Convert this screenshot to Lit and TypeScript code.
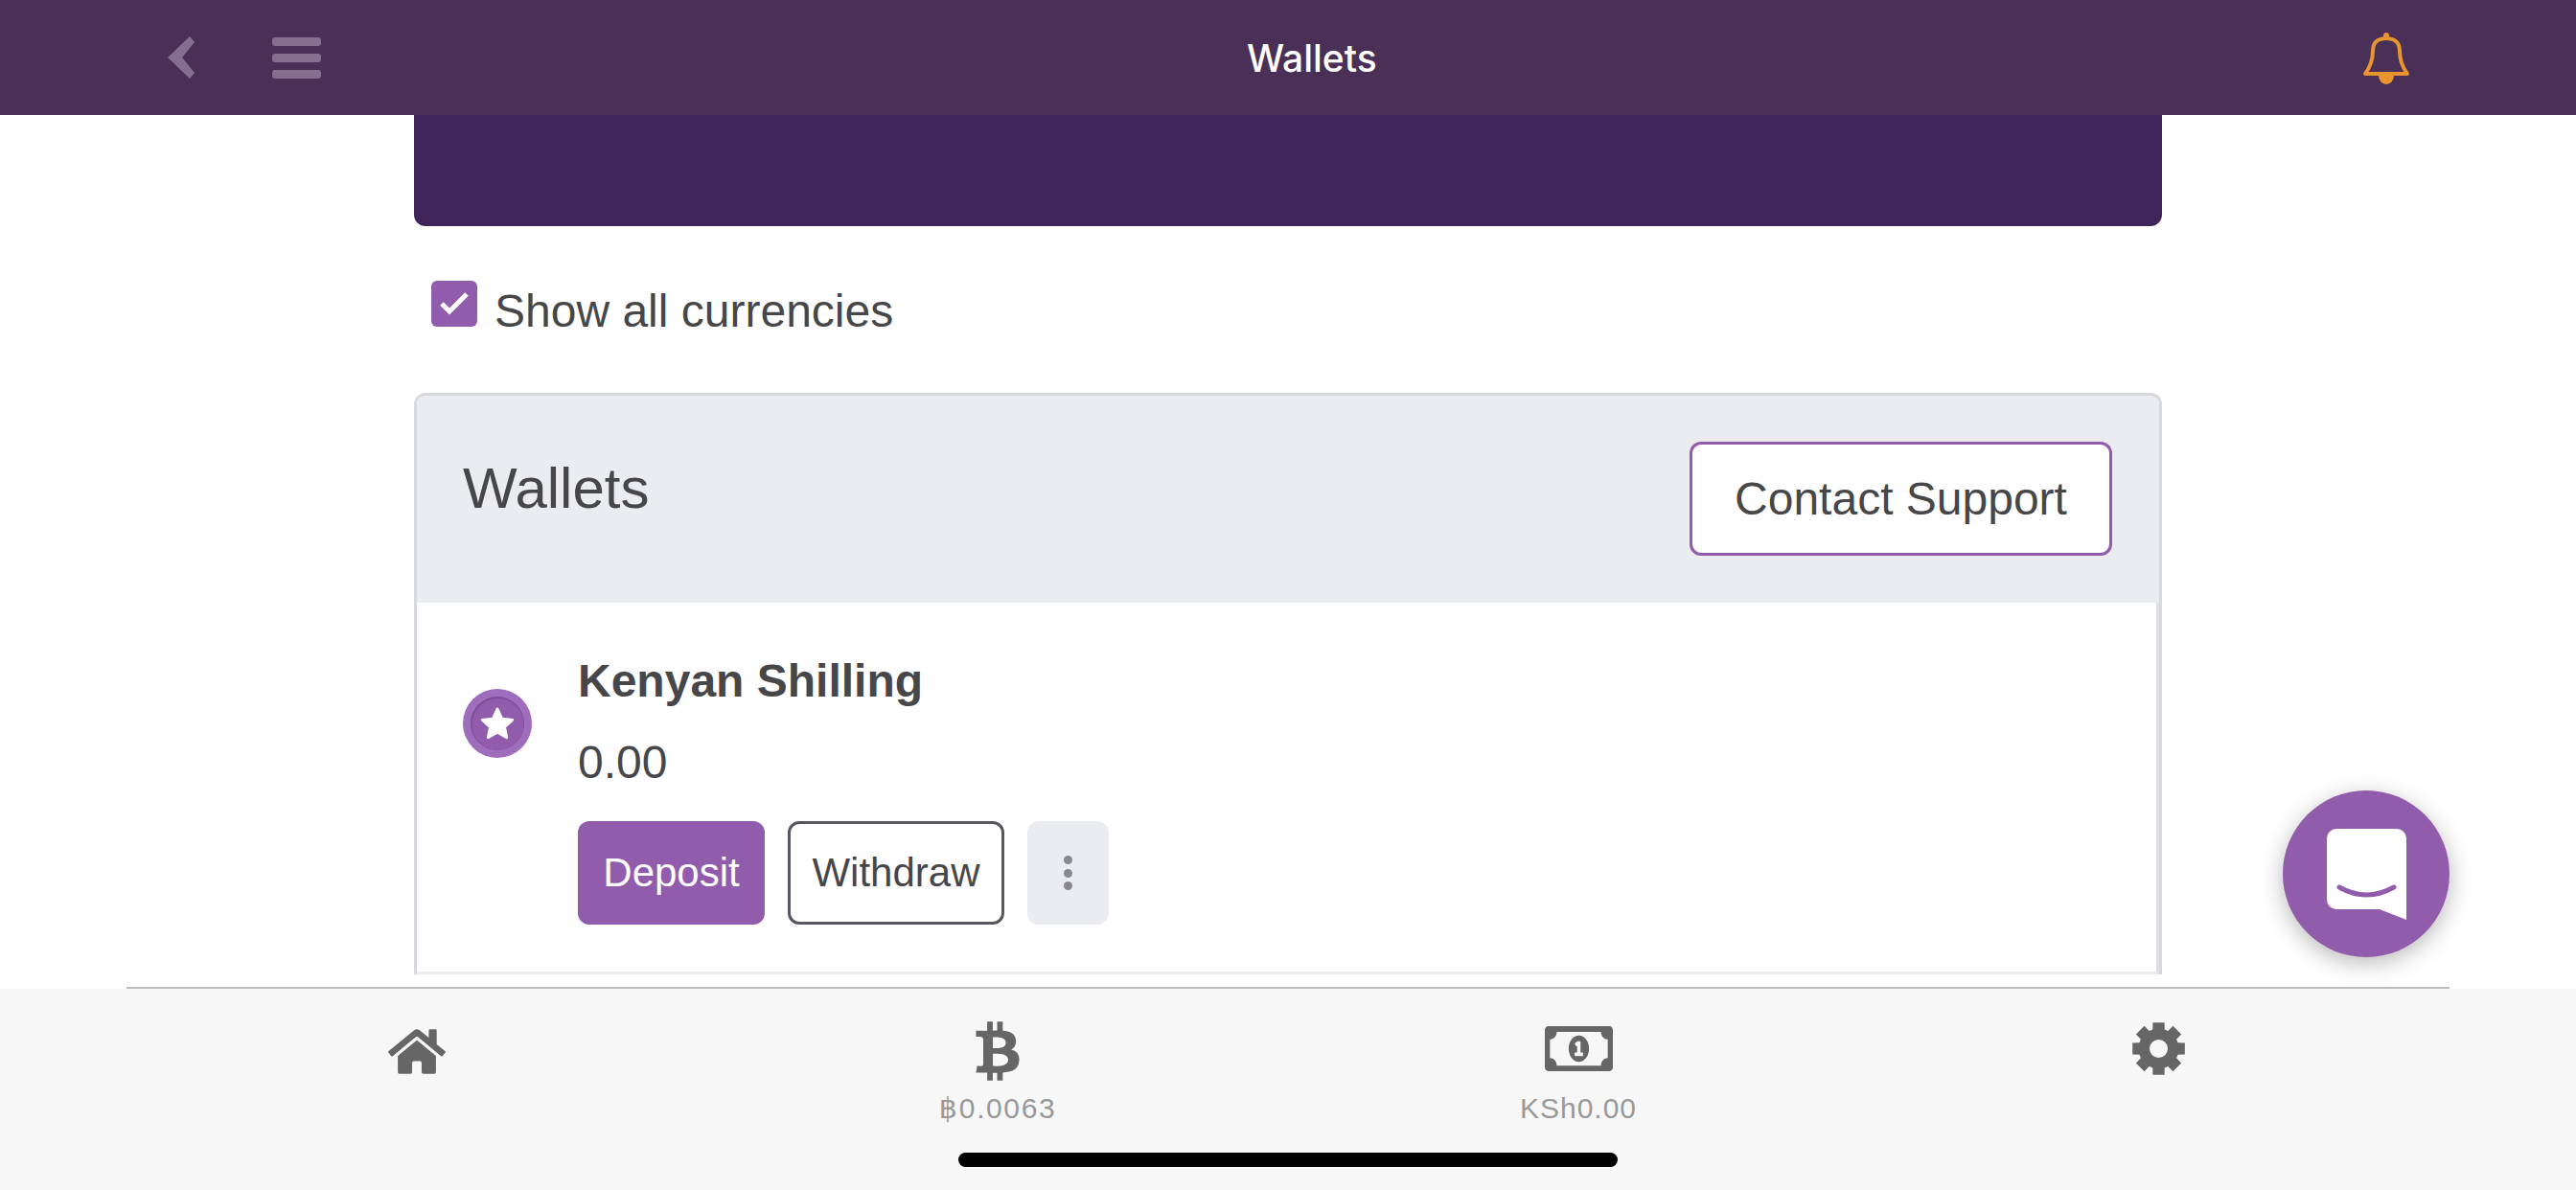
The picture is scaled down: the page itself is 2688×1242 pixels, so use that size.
import { LitElement, html, css, svg } from 'lit';
import { customElement } from 'lit/decorators.js';

// eight tooth gear, outer radius 28, centred in a 57 box
function gearPath(): string {
  const c = 28.5;
  const pts: string[] = [];
  const pt = (r: number, a: number) =>
    `${(c + r * Math.cos(a)).toFixed(2)} ${(c + r * Math.sin(a)).toFixed(2)}`;
  for (let i = 0; i < 8; i++) {
    const a = (i * Math.PI) / 4 - Math.PI / 2;
    pts.push(pt(21, a - 0.3), pt(28, a - 0.22), pt(28, a + 0.22), pt(21, a + 0.3));
  }
  return `M${pts.join('L')}Z`;
}

const HOME =
  'M280.37 148.26L96 300.11V464a16 16 0 0 0 16 16l112.06-.29a16 16 0 0 0 15.92-16V368a16 16 0 0 1 16-16h64a16 16 0 0 1 16 16v95.64a16 16 0 0 0 16 16.05L464 480a16 16 0 0 0 16-16V300L295.67 148.26a12.19 12.19 0 0 0-15.3 0zM571.6 251.47L488 182.56V44.05a12 12 0 0 0-12-12h-56a12 12 0 0 0-12 12v72.61L318.47 43a48 48 0 0 0-61 0L4.34 251.47a12 12 0 0 0-1.6 16.9l25.5 31A12 12 0 0 0 45.15 301l235.22-193.74a12.19 12.19 0 0 1 15.3 0L530.9 301a12 12 0 0 0 16.9-1.6l25.5-31a12 12 0 0 0-1.7-16.93z';
const BTC =
  'M310.204 242.638c27.73-14.18 45.377-39.39 41.28-81.3-5.358-57.351-52.458-76.573-114.85-81.929V0h-48.528v77.203c-12.605 0-25.525.315-38.444.63V0h-48.528v79.409c-17.842.539-38.622.276-97.37 0v51.678c38.31-.678 58.41-3.14 63.023 21.427v217.429c-2.925 19.492-18.524 16.685-53.2 16.071L3.76 443.68c88.48 0 97.37.315 97.37.315V512h48.528v-67.06c13.234.315 26.154.315 38.444.315V512h48.528v-68.005c81.299-4.412 135.647-24.894 142.895-101.467 5.671-61.446-23.32-88.862-69.32-99.89zM150.608 134.553c27.415 0 113.126-8.507 113.126 48.528 0 54.515-85.71 48.212-113.126 48.212v-96.74zm0 251.776V279.821c32.772 0 133.127-9.138 133.127 53.255-.001 60.186-100.355 53.253-133.127 53.253z';
const BILL =
  'M320 144c-53.02 0-96 50.14-96 112 0 61.85 42.98 112 96 112 53 0 96-50.13 96-112 0-61.86-42.98-112-96-112zm40 168c0 4.42-3.58 8-8 8h-64c-4.42 0-8-3.58-8-8v-16c0-4.42 3.58-8 8-8h16v-55.44l-.47.31a7.992 7.992 0 0 1-11.09-2.22l-8.88-13.31a7.992 7.992 0 0 1 2.22-11.09l15.33-10.22a23.99 23.99 0 0 1 13.31-4.03H328c4.42 0 8 3.58 8 8v88h16c4.42 0 8 3.58 8 8v16zM608 64H32C14.33 64 0 78.33 0 96v320c0 17.67 14.33 32 32 32h576c17.67 0 32-14.33 32-32V96c0-17.67-14.33-32-32-32zm-16 272c-35.35 0-64 28.65-64 64H112c0-35.35-28.65-64-64-64V176c35.35 0 64-28.65 64-64h416c0 35.35 28.65 64 64 64v160z';

@customElement('app-root')
export class AppRoot extends LitElement {
  static styles = css`
    :host {
      display: flex;
      flex-direction: column;
      position: relative;
      height: 1242px;
      overflow: hidden;
      background: #fff;
      color: #47474a;
      font-family: 'Liberation Sans', 'DejaVu Sans', sans-serif;
    }
    .topbar {
      flex: none;
      height: 120px;
      display: flex;
      align-items: center;
      padding: 0 173px 0 175px;
      background: #4a3057;
    }
    .back {
      display: block;
      width: 28px;
      height: 44px;
      margin-right: 81px;
    }
    .bars {
      display: flex;
      flex-direction: column;
      gap: 8px;
      width: 51px;
    }
    .bars span {
      height: 9px;
      border-radius: 3px;
      background: #84708e;
    }
    .title {
      margin: 1px 0 0 966px;
      font: 500 39px/48px Inter, sans-serif;
      color: #fff;
    }
    .bell {
      display: block;
      width: 50px;
      height: 55px;
      margin-left: auto;
      margin-top: 1px;
    }
    main {
      flex: 1;
      min-height: 0;
      overflow: hidden;
      padding: 0 432px;
    }
    .panel {
      height: 116px;
      background: #3e2459;
      border-radius: 0 0 12px 12px;
    }
    .show-all {
      display: flex;
      margin: 57px 0 61px 18px;
    }
    .box {
      width: 48px;
      height: 48px;
      flex: none;
      border-radius: 6px;
      background: #925cad;
    }
    .box svg {
      display: block;
    }
    .show-all label {
      margin: 8px 0 0 18px;
      font-size: 48px;
      line-height: 48px;
    }
    .card {
      border: 3px solid #d8d9de;
      border-bottom: 0;
      border-radius: 12px 12px 0 0;
    }
    .card-head {
      display: flex;
      justify-content: space-between;
      align-items: flex-start;
      padding: 48px 49px 49px 48px;
      background: #ebecf0;
      border-radius: 9px 9px 0 0;
    }
    h2 {
      margin: 13px 0 0;
      font-size: 60px;
      line-height: 72px;
      font-weight: 400;
    }
    .contact {
      box-sizing: border-box;
      width: 441px;
      height: 119px;
      border: 3px solid #925cad;
      border-radius: 12px;
      background: #fff;
      color: inherit;
      font: inherit;
      font-size: 48px;
    }
    .row {
      display: flex;
      gap: 48px;
      padding: 53px 48px 49px;
      border-right: 3px solid #dfdfe5;
      border-bottom: 3px solid #ebebf0;
    }
    .coin {
      display: block;
      flex: none;
      width: 72px;
      height: 72px;
      margin-top: 37px;
    }
    .name {
      font-size: 48px;
      line-height: 58px;
      font-weight: 700;
    }
    .amount {
      margin-top: 27px;
      font-size: 48px;
      line-height: 58px;
    }
    .actions {
      display: flex;
      gap: 24px;
      margin-top: 32px;
    }
    .actions button {
      box-sizing: border-box;
      height: 108px;
      border-radius: 12px;
      font: inherit;
      font-size: 42px;
      padding: 0;
    }
    .deposit {
      width: 195px;
      border: 0;
      background: #925cad;
      color: #fff;
    }
    .withdraw {
      width: 226px;
      border: 3px solid #5b5560;
      background: #fff;
      color: inherit;
    }
    .more {
      width: 85px;
      border: 0;
      background: #ebecf0;
      display: flex;
      flex-direction: column;
      align-items: center;
      justify-content: center;
      gap: 4.5px;
    }
    .more i {
      width: 9px;
      height: 9px;
      border-radius: 50%;
      background: #88888e;
    }
    footer {
      flex: none;
      height: 210px;
      background: #f7f7f7;
    }
    .rule {
      height: 2px;
      margin: -2px 132px 0;
      background: #bdbdbd;
    }
    .tabs {
      display: grid;
      grid-template-columns: repeat(4, 606px);
      margin: 0 132px;
      padding-top: 34px;
    }
    .tab {
      display: flex;
      flex-direction: column;
      align-items: center;
    }
    .slot {
      height: 62px;
    }
    .slot svg {
      display: block;
      fill: #666;
    }
    .slot .low {
      margin-top: 5px;
    }
    .slot .gear {
      margin-left: -1px;
    }
    .tab span {
      margin-top: 11px;
      font-size: 30px;
      line-height: 36px;
      letter-spacing: 1px;
      color: #999;
    }
    .tab .wide {
      letter-spacing: 1.6px;
    }
    .wide i {
      font-style: normal;
      letter-spacing: 2px;
    }
    .home-bar {
      position: absolute;
      left: 1000px;
      top: 1203px;
      width: 688px;
      height: 15px;
      border-radius: 8px;
      background: #000;
    }
    .fab {
      position: absolute;
      left: 2382px;
      top: 825px;
      width: 174px;
      height: 174px;
      display: flex;
      justify-content: center;
      padding-top: 40px;
      box-sizing: border-box;
      border-radius: 50%;
      background: #925cad;
      box-shadow: 0 6px 24px rgba(0, 0, 0, 0.28);
    }
    .fab svg {
      display: block;
    }
  `;

  render() {
    return html`
      <header class="topbar">
        <svg class="back" viewBox="0 0 28 44">
          <path d="M0 22L23 0l5 6-13 16 13 16-5 6z" fill="#84708e" />
        </svg>
        <div class="bars"><span></span><span></span><span></span></div>
        <div class="title">Wallets</div>
        <svg class="bell" viewBox="0 0 50 55">
          <circle cx="25" cy="4" r="3" fill="#e89530" />
          <path d="M17 46a8 9 0 0 0 16 0z" fill="#e89530" />
          <path
            d="M3 44C9 36 11 29 11 20C11 11 17 7 25 7C33 7 39 11 39 20C39 29 41 36 47 44Z"
            fill="#4a3057"
            stroke="#e89530"
            stroke-width="4"
            stroke-linejoin="round"
          />
        </svg>
      </header>

      <main>
        <div class="panel"></div>
        <div class="show-all">
          <div class="box">
            <svg width="48" height="48" viewBox="0 0 48 48">
              <path d="M11 24l8 8 18-18" fill="none" stroke="#fff" stroke-width="5" />
            </svg>
          </div>
          <label>Show all currencies</label>
        </div>

        <section class="card">
          <div class="card-head">
            <h2>Wallets</h2>
            <button class="contact">Contact Support</button>
          </div>
          <div class="row">
            <svg class="coin" viewBox="0 0 72 72">
              <circle cx="36" cy="36" r="36" fill="#9e6dbb" />
              <circle cx="36" cy="36" r="28" fill="#7d4e97" />
              <circle cx="36.5" cy="37" r="27" fill="#925cad" />
              <path
                d="M36 21l4.600 10.200 11 1.200-8.200 7.400 2.300 10.900L36 45.200l-9.700 5.500 2.300-10.900-8.200-7.400 11-1.200z"
                fill="#fff"
                stroke="#fff"
                stroke-width="3"
                stroke-linejoin="round"
              />
            </svg>
            <div>
              <div class="name">Kenyan Shilling</div>
              <div class="amount">0.00</div>
              <div class="actions">
                <button class="deposit">Deposit</button>
                <button class="withdraw">Withdraw</button>
                <button class="more"><i></i><i></i><i></i></button>
              </div>
            </div>
          </div>
        </section>
      </main>

      <footer>
        <div class="rule"></div>
        <nav class="tabs">
          <div class="tab">
            <div class="slot">
              <svg class="low" width="60" height="53" viewBox="0 0 576 512"><path d=${HOME} /></svg>
            </div>
          </div>
          <div class="tab">
            <div class="slot">
              <svg width="46" height="62" viewBox="0 0 384 512"><path d=${BTC} /></svg>
            </div>
            <span class="wide"><i>฿</i>0.0063</span>
          </div>
          <div class="tab">
            <div class="slot">
              <svg class="low" width="71" height="47" viewBox="0 64 640 384" preserveAspectRatio="none">
                <path d=${BILL} />
              </svg>
            </div>
            <span>KSh0.00</span>
          </div>
          <div class="tab">
            <div class="slot">
              <svg class="gear" width="57" height="57" viewBox="0 0 57 57">
                ${svg`<path fill-rule="evenodd" d="${gearPath()} M28.5 19a9.5 9.5 0 1 0 0 19a9.5 9.5 0 1 0 0-19z" />`}
              </svg>
            </div>
          </div>
        </nav>
      </footer>

      <div class="home-bar"></div>
      <div class="fab">
        <svg width="83" height="95" viewBox="0 0 83 95">
          <path
            d="M10 0H73a10 10 0 0 1 10 10V95L55 84H10a10 10 0 0 1-10-10V10a10 10 0 0 1 10-10z"
            fill="#fff"
          />
          <path d="M13 61Q41.500 77 70 61" fill="none" stroke="#925cad" stroke-width="5" stroke-linecap="round" />
        </svg>
      </div>
    `;
  }
}
